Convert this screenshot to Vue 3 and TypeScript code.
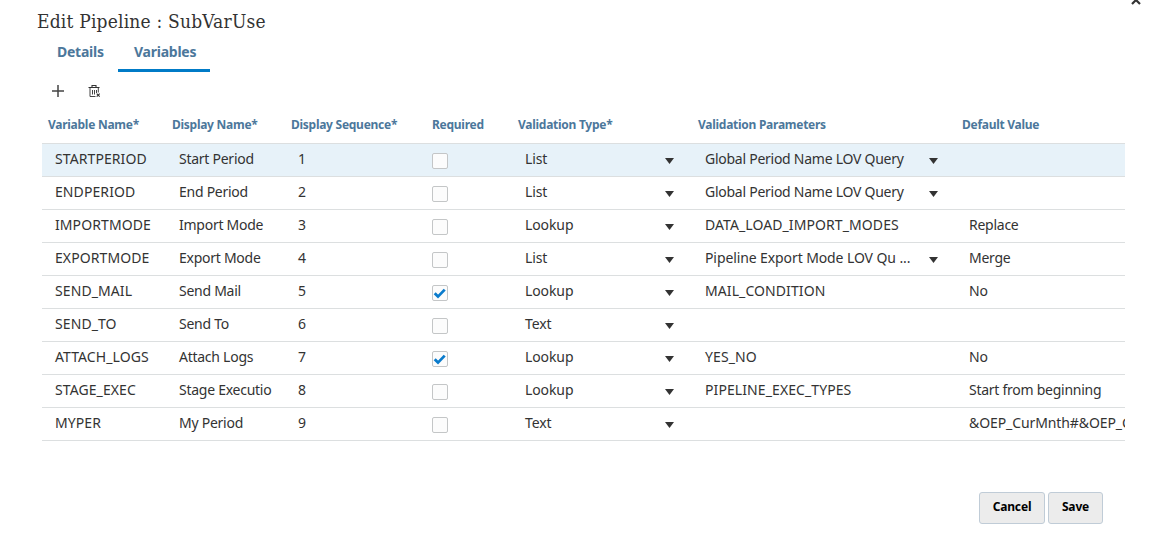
<script setup lang="ts">
interface Variable {
  name: string
  display: string
  required?: boolean
  type: string
  params?: string
  paramList?: boolean
  value?: string
}

const headers: string[] = [
  'Variable Name*', 'Display Name*', 'Display Sequence*', 'Required',
  'Validation Type*', 'Validation Parameters', 'Default Value',
]

const variables: Variable[] = [
  { name: 'STARTPERIOD', display: 'Start Period', type: 'List', params: 'Global Period Name LOV Query', paramList: true },
  { name: 'ENDPERIOD', display: 'End Period', type: 'List', params: 'Global Period Name LOV Query', paramList: true },
  { name: 'IMPORTMODE', display: 'Import Mode', type: 'Lookup', params: 'DATA_LOAD_IMPORT_MODES', value: 'Replace' },
  { name: 'EXPORTMODE', display: 'Export Mode', type: 'List', params: 'Pipeline Export Mode LOV Qu ...', paramList: true, value: 'Merge' },
  { name: 'SEND_MAIL', display: 'Send Mail', required: true, type: 'Lookup', params: 'MAIL_CONDITION', value: 'No' },
  { name: 'SEND_TO', display: 'Send To', type: 'Text' },
  { name: 'ATTACH_LOGS', display: 'Attach Logs', required: true, type: 'Lookup', params: 'YES_NO', value: 'No' },
  { name: 'STAGE_EXEC', display: 'Stage Executio', type: 'Lookup', params: 'PIPELINE_EXEC_TYPES', value: 'Start from beginning' },
  { name: 'MYPER', display: 'My Period', type: 'Text', value: '&OEP_CurMnth#&OEP_C' },
]

// Upper-case codes are set a little looser than ordinary labels.
function spacing(text?: string): string {
  if (!text) return ''
  if (/^[A-Z_]+$/.test(text)) return 'code'
  if (text.startsWith('&') || text.endsWith('...')) return 'mixed'
  return ''
}
</script>

<template>
  <main class="dialog">
    <svg class="close" width="12" height="5" viewBox="0 0 12 5" aria-label="Close">
      <path d="M2 4 6 0l4 4" fill="none" stroke="#333" stroke-width="2.200" />
    </svg>
    <h1>Edit Pipeline : SubVarUse</h1>
    <nav class="tabs">
      <a class="tab details">Details</a>
      <a class="tab active">Variables</a>
    </nav>
    <div class="toolbar">
      <svg width="13" height="13" viewBox="0 0 13 13" aria-label="Add">
        <path d="M6 0v12M0 6h12" stroke="#444" stroke-width="1.500" />
      </svg>
      <svg class="trash" width="13" height="13" viewBox="0 0 13 13" aria-label="Delete">
        <path d="M.5 2.500h11M4 2.500v-2h4v2" fill="none" stroke="#333" stroke-width="1.100" />
        <path d="M2 3v8.500h5.500M10.300 3v4.500M4.500 5v4.500M6.500 5v4.500M8.500 5v3" fill="none" stroke="#444" />
        <path d="M8.700 8.700l3 3M11.700 8.700l-3 3" stroke="#333" stroke-width="1.100" />
      </svg>
    </div>
    <section class="table">
      <div class="row head">
        <div v-for="h in headers" :key="h"><span>{{ h }}</span></div>
      </div>
      <div v-for="(v, i) in variables" :key="v.name" class="row" :class="{ selected: i === 0 }">
        <div class="cell code">{{ v.name }}</div>
        <div class="cell">{{ v.display }}</div>
        <div class="cell">{{ i + 1 }}</div>
        <div class="check-cell">
          <span class="box">
            <svg v-if="v.required" width="14" height="14" viewBox="0 0 14 14">
              <path d="M1.700 7.300 5 10.600l6.700-7" fill="none" stroke="#0a7bcc" stroke-width="2.800" />
            </svg>
          </span>
        </div>
        <div class="cell select">
          <span class="type">{{ v.type }}</span>
          <svg class="arrow" width="9" height="6" viewBox="0 0 9 6"><path d="M0 0h9L4.500 6z" fill="#333" /></svg>
        </div>
        <div class="cell select">
          <span :class="spacing(v.params)">{{ v.params }}</span>
          <svg v-if="v.paramList" class="arrow" width="9" height="6" viewBox="0 0 9 6"><path d="M0 0h9L4.500 6z" fill="#333" /></svg>
        </div>
        <div class="cell" :class="spacing(v.value)">{{ v.value }}</div>
      </div>
    </section>
    <footer>
      <button class="cancel">Cancel</button>
      <button class="save">Save</button>
    </footer>
  </main>
</template>

<style>
body { background: #fff; }
</style>

<style scoped>
.dialog {
  position: relative;
  box-sizing: border-box;
  width: 1150px;
  height: 539px;
  overflow: hidden;
  font-family: "Noto Sans", sans-serif;
  color: #333;
}
.close { position: absolute; left: 1130px; top: 0; }
h1 {
  margin: 0;
  padding: 8px 0 0 37px;
  height: 28px;
  font: 400 19px/27px "DejaVu Serif Condensed", "DejaVu Serif", serif;
  font-stretch: condensed;
  letter-spacing: .2px;
  white-space: nowrap;
  color: #333;
}
.tabs { display: flex; height: 36px; padding-left: 42px; }
.tab {
  box-sizing: border-box;
  height: 36px;
  padding: 7px 14px 0 15px;
  font-size: 14px;
  font-weight: 700;
  line-height: 18px;
  letter-spacing: -.25px;
  color: #4c779b;
  white-space: nowrap;
}
.details { width: 76px; }
.active { width: 92px; padding-left: 16px; border-bottom: 3px solid #007bc7; }
.toolbar { display: flex; height: 34px; padding: 13px 0 0 52px; box-sizing: border-box; }
.trash { margin-left: 23px; }
.table { width: 1083px; margin-left: 42px; }
.row {
  display: grid;
  grid-template-columns: 124px 119px 141px 86px 180px 264px 169px;
  height: 33px;
  box-sizing: border-box;
  border-bottom: 1px solid #dcdfe0;
}
.head {
  height: 38px;
  padding-top: 10px;
  font-size: 12px;
  font-weight: 700;
  line-height: 18px;
  letter-spacing: -.27px;
  color: #4c779b;
  white-space: nowrap;
}
.head > div { padding-left: 6px; }
.selected { background: #e7f2f9; }
.cell {
  min-width: 0;
  padding: 5px 0 0 13px;
  font-size: 14px;
  line-height: 20px;
  letter-spacing: -.26px;
  white-space: nowrap;
  overflow: hidden;
}
.code { letter-spacing: .09px; }
.mixed { letter-spacing: -.1px; }
.type { letter-spacing: -.1px; }
.check-cell { padding: 9px 0 0 6px; }
.box {
  display: block;
  box-sizing: border-box;
  width: 16px;
  height: 16px;
  border: 1px solid #c4c6c7;
  border-radius: 2px;
  background: #fcfcfc;
}
.box svg { display: block; }
.select { display: flex; justify-content: space-between; }
.arrow { flex: none; margin: 9px 18px 0 0; }
footer { display: flex; gap: 3px; padding: 51px 0 0 979px; }
button {
  box-sizing: border-box;
  height: 32px;
  padding: 0 0 2px;
  border: 1px solid #c0ccd7;
  border-radius: 3px;
  background: #ececec;
  color: #000;
  font: 700 12px/18px "Noto Sans", sans-serif;
  letter-spacing: -.15px;
}
.cancel { width: 66px; }
.save { width: 55px; }
</style>
